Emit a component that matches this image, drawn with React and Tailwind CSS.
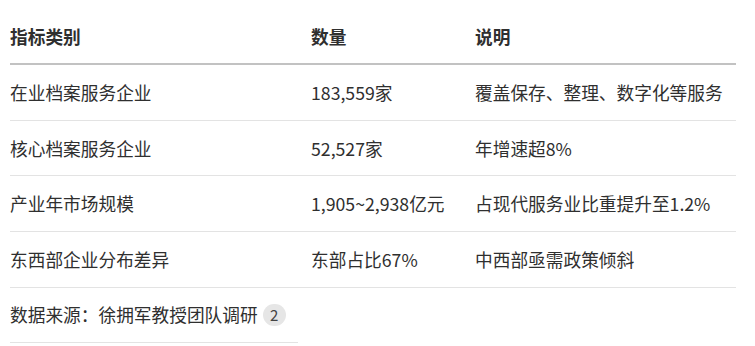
export default function App() {
  const rows = [
    ["在业档案服务企业", "183,559家", "覆盖保存、整理、数字化等服务"],
    ["核心档案服务企业", "52,527家", "年增速超8%"],
    ["产业年市场规模", "1,905~2,938亿元", "占现代服务业比重提升至1.2%"],
    ["东西部企业分布差异", "东部占比67%", "中西部亟需政策倾斜"],
  ];
  return (
    <div
      className="w-[755px] h-[346px] bg-white overflow-hidden px-[10px] text-[#2f2f2f] text-[17.7px]"
      style={{ fontFamily: '"Noto Sans CJK SC", "Noto Sans", sans-serif' }}
    >
      <div className="w-[726px]">
        <div className="grid grid-cols-[301px_164px_261px] h-[65px] pt-[10px] items-center border-b-2 border-[#c2c2c2] font-bold">
          <div>指标类别</div>
          <div>数量</div>
          <div>说明</div>
        </div>
        {rows.map((r, i) => (
          <div
            key={i}
            className="grid grid-cols-[301px_164px_261px] h-[55.7px] items-center border-b border-[#e3e3e3] whitespace-nowrap"
          >
            <div>{r[0]}</div>
            <div>{r[1]}</div>
            <div>{r[2]}</div>
          </div>
        ))}
      </div>
      <div className="inline-flex items-center h-[55px] pr-[12px] border-b border-[#e3e3e3] whitespace-nowrap">
        <span>数据来源：徐拥军教授团队调研</span>
        <span className="ml-[5px] inline-flex items-center justify-center w-[23px] h-[22px] rounded-full bg-[#e6e6e6] text-[15px] text-[#444]">
          2
        </span>
      </div>
    </div>
  );
}
